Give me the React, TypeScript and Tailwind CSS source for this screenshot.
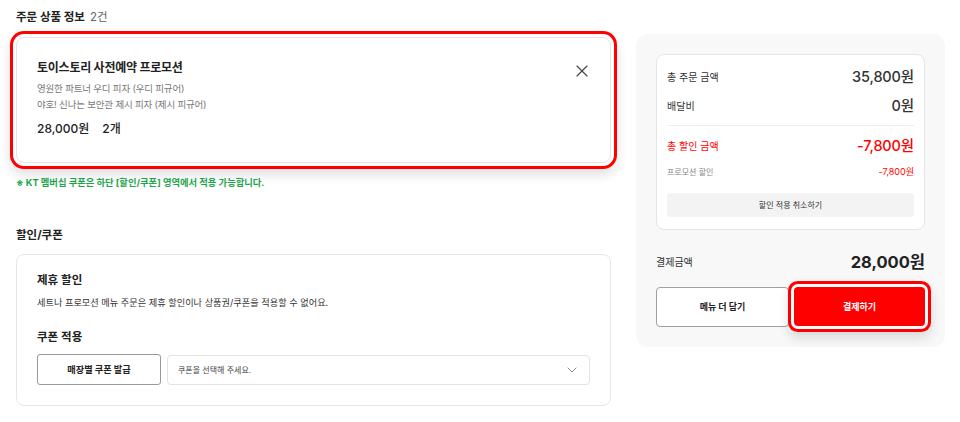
import { X, ChevronDown } from 'lucide-react';

const ringRed =
  'shadow-[0_0_0_3px_#fff,0_0_0_6px_#ff0000,0_6px_12px_6px_rgba(0,0,0,0.12)]';

function OrderItem() {
  return (
    <div className={`mt-[10px] flex h-[126px] rounded-[8px] border border-[#e6e6e6] bg-white pl-[20px] pr-[18px] pt-[20px] ${ringRed}`}>
      <div className="flex-1">
        <div className="text-[12px] font-bold leading-[20px] tracking-[-0.02em] text-[#222]">토이스토리 사전예약 프로모션</div>
        <div className="mt-[3px] text-[9.5px] leading-[16px] tracking-[-0.02em] text-[#777]">
          <div>영원한 파트너 우디 피자 (우디 피규어)</div>
          <div>야호! 신나는 보안관 제시 피자 (제시 피규어)</div>
        </div>
        <div className="mt-[6px] flex gap-[13px] text-[12px] font-medium leading-[20px] text-[#222]">
          <span>28,000원</span>
          <span>2개</span>
        </div>
      </div>
      <button className="mt-[3px] h-[20px] w-[20px] text-[#444]">
        <X size={20} strokeWidth={1.4} />
      </button>
    </div>
  );
}

function Coupons() {
  return (
    <div className="mt-[9px] rounded-[8px] border border-[#e6e6e6] bg-white pb-[20px] pl-[20px] pr-[20px] pt-[15px]">
      <div className="text-[11.5px] font-semibold leading-[20px] text-[#222]">제휴 할인</div>
      <div className="mt-[5px] text-[9.2px] leading-[16px] text-[#333]">
        세트나 프로모션 메뉴 주문은 제휴 할인이나 상품권/쿠폰을 적용할 수 없어요.
      </div>
      <div className="mt-[16px] text-[11.5px] font-semibold leading-[20px] text-[#222]">쿠폰 적용</div>
      <div className="mt-[7px] flex items-center gap-[6px]">
        <button className="h-[31px] w-[124px] rounded-[3px] border border-[#9a9a9a] bg-white text-[9.2px] font-bold text-[#222]">
          매장별 쿠폰 발급
        </button>
        <div className="flex h-[30px] flex-1 items-center justify-between rounded-[4px] border border-[#e3e3e3] bg-white pl-[10px] pr-[9px]">
          <span className="text-[8px] text-[#444]">쿠폰을 선택해 주세요.</span>
          <ChevronDown size={16} strokeWidth={1.3} className="text-[#777]" />
        </div>
      </div>
    </div>
  );
}

function Summary() {
  return (
    <div className="ml-[25px] mt-[34px] w-[309px] shrink-0 rounded-[12px] bg-[#f8f8f8] p-[20px]">
      <div className="rounded-[8px] border border-[#e6e6e6] bg-white px-[10px] pb-[12px] pt-[8px]">
        <div className="flex h-[28px] items-center justify-between text-[#333]">
          <span className="text-[10px]">총 주문 금액</span>
          <span className="text-[14.5px] font-medium tracking-[-0.01em]">35,800원</span>
        </div>
        <div className="mt-px flex h-[28px] items-center justify-between text-[#333]">
          <span className="text-[10px]">배달비</span>
          <span className="text-[14.5px] font-medium tracking-[-0.01em]">0원</span>
        </div>
        <div className="mt-[5px] h-px bg-[#eeeeee]" />
        <div className="mt-[6px] flex h-[28px] items-center justify-between text-[#ff0000]">
          <span className="text-[10px]">총 할인 금액</span>
          <span className="text-[14.5px] font-medium tracking-[-0.01em]">-7,800원</span>
        </div>
        <div className="mt-[2px] flex h-[20px] items-center justify-between">
          <span className="text-[8px] text-[#888]">프로모션 할인</span>
          <span className="text-[9px] text-[#ff0000]">-7,800원</span>
        </div>
        <button className="mt-[11px] h-[24px] w-full rounded-[4px] bg-[#f3f3f3] text-[8px] text-[#333]">
          할인 적용 취소하기
        </button>
      </div>
      <div className="mt-[18px] flex h-[28px] items-center justify-between text-[#333]">
        <span className="text-[10px]">결제금액</span>
        <span className="text-[16.5px] font-bold text-[#222]">28,000원</span>
      </div>
      <div className="mt-[11px] flex gap-[5px]">
        <button className="h-[40px] flex-1 rounded-[4px] border border-[#a0a0a0] bg-white text-[9px] font-bold text-[#222]">
          메뉴 더 담기
        </button>
        <button className={`h-[39px] flex-1 rounded-[4px] bg-[#ff0000] text-[9px] font-bold text-white ${ringRed}`}>
          결제하기
        </button>
      </div>
    </div>
  );
}

export default function App() {
  return (
    <div className="flex h-[422px] w-[960px] items-start bg-white pl-4 font-['Inter','Noto_Sans_CJK_KR',sans-serif]">
      <div className="flex w-[595px] shrink-0 flex-col">
        <div className="flex items-center gap-[5px] pt-[7px] text-[11.5px] leading-[20px]">
          <span className="font-bold text-[#222]">주문 상품 정보</span>
          <span className="text-[#666]">2건</span>
        </div>
        <OrderItem />
        <div className="mt-[13px] text-[9.3px] font-bold leading-[14px] text-[#1ea54c]">
          ※ KT 멤버십 쿠폰은 하단 [할인/쿠폰] 영역에서 적용 가능합니다.
        </div>
        <div className="mt-[35px] text-[11.5px] font-bold leading-[20px] text-[#222]">할인/쿠폰</div>
        <Coupons />
      </div>
      <Summary />
    </div>
  );
}
